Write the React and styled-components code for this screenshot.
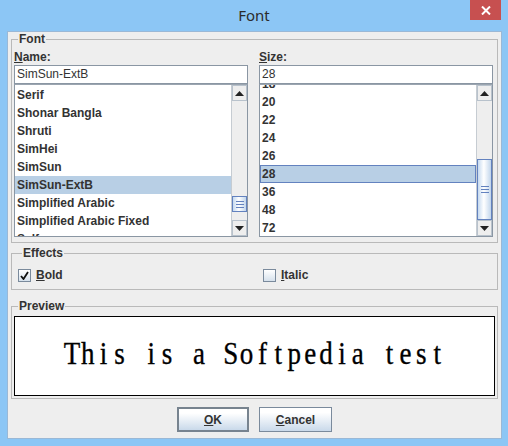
import React from 'react'
import styled, { createGlobalStyle } from 'styled-components'

const GlobalStyle = createGlobalStyle`
  html, body {
    margin: 0;
    padding: 0;
    background: #8cc6f5;
  }
  * {
    box-sizing: border-box;
  }
`

const fontNames = [
  'Serif',
  'Shonar Bangla',
  'Shruti',
  'SimHei',
  'SimSun',
  'SimSun-ExtB',
  'Simplified Arabic',
  'Simplified Arabic Fixed',
  'Sylfaen',
]

const sizes = ['18', '20', '22', '24', '26', '28', '36', '48', '72']

const previewText = 'This is a Softpedia test'

const Window = styled.div`
  width: 508px;
  height: 446px;
  background: #8cc6f5;
  display: flex;
  flex-direction: column;
  font-family: 'Liberation Sans', Arial, sans-serif;
  color: #333;
`

const TitleBar = styled.div`
  height: 31px;
  display: grid;
  grid-template-columns: 1fr auto 1fr;
  align-items: start;
`

const Title = styled.div`
  grid-column: 2;
  font-family: 'Noto Sans', 'Open Sans', sans-serif;
  font-size: 15px;
  line-height: 30px;
  color: #2b2b2b;
`

const CloseButton = styled.div`
  grid-column: 3;
  justify-self: end;
  margin-right: 7px;
  width: 31px;
  height: 20px;
  background: #c75050;
  display: flex;
  align-items: center;
  justify-content: center;
`

const Client = styled.div`
  flex: 1;
  margin: 0 6px 7px 7px;
  border: 1px solid #9ab8d6;
  background: #eeeeee;
  display: flex;
  flex-direction: column;
`

const Group = styled.fieldset`
  margin: ${(p) => p.$top || 0}px 3px 0 3px;
  min-width: 0;
  height: ${(p) => p.$height}px;
  border: 1px solid #b9b9b9;
  padding: ${(p) => p.$padding};
`

const Legend = styled.legend`
  margin-left: 4px;
  padding: 0 1px;
  font-size: 12px;
  font-weight: bold;
  line-height: 14px;
  color: #333;
`

const Columns = styled.div`
  display: grid;
  grid-template-columns: 234px 234px;
  column-gap: 11px;
`

const Column = styled.div`
  display: flex;
  flex-direction: column;
`

const Label = styled.div`
  font-size: 12px;
  font-weight: bold;
  line-height: 15px;
  height: 15px;
`

const TextField = styled.div`
  height: 19px;
  border: 1px solid #8a96a3;
  background: #fff;
  font-size: 12px;
  line-height: 17px;
  padding-left: 2px;
`

const ListBox = styled.div`
  height: 153px;
  border: 1px solid #8a96a3;
  border-top-color: #9ba5b0;
  background: #fff;
  display: flex;
  overflow: hidden;
`

const Items = styled.div`
  flex: 1;
  overflow: hidden;
  display: flex;
  flex-direction: column;
`

const ItemsInner = styled.div`
  margin-top: ${(p) => p.$offset}px;
  display: flex;
  flex-direction: column;
`

const Item = styled.div`
  height: 18px;
  flex: none;
  font-size: 12px;
  font-weight: bold;
  padding-left: ${(p) => p.$indent}px;
  white-space: nowrap;
  background: ${(p) => (p.$selected ? '#b8cfe5' : 'transparent')};
  border: ${(p) => (p.$focused ? '1px solid #6382bf' : 'none')};
  line-height: ${(p) => (p.$focused ? '16px' : '18px')};
`

const ScrollBar = styled.div`
  width: 16px;
  flex: none;
  background: #eeeeee;
  border-left: 1px solid #c6ccd2;
  display: flex;
  flex-direction: column;
`

const ArrowButton = styled.div`
  height: 16px;
  flex: none;
  border: 1px solid #b8c2cc;
  background: #eeeeee;
  display: flex;
  align-items: center;
  justify-content: center;
`

const Track = styled.div`
  flex: 1;
  display: flex;
  flex-direction: column;
`

const Thumb = styled.div`
  margin-top: ${(p) => p.$top}px;
  height: ${(p) => p.$height}px;
  border: 1px solid #6382bf;
  background: linear-gradient(to right, #c6daf0, #ffffff 45%, #c2d6ec);
  display: flex;
  flex-direction: column;
  align-items: center;
  justify-content: center;
  gap: 2px;
`

const Grip = styled.div`
  width: 8px;
  height: 1px;
  background: #6382bf;
`

const CheckRow = styled.div`
  display: grid;
  grid-template-columns: 245px 1fr;
  align-items: center;
`

const CheckItem = styled.label`
  display: flex;
  align-items: center;
  gap: 5px;
  font-size: 12px;
  font-weight: bold;
  line-height: 15px;
`

const CheckBox = styled.span`
  width: 13px;
  height: 13px;
  border: 1px solid #7a8a9c;
  background: linear-gradient(#ffffff, #d6e1ec);
  display: flex;
  align-items: center;
  justify-content: center;
`

const PreviewBox = styled.div`
  height: 80px;
  border: 1px solid #000;
  background: #fff;
  display: flex;
  align-items: center;
  justify-content: center;
`

const PreviewLine = styled.div`
  display: flex;
  font-family: 'Liberation Serif', 'DejaVu Serif', serif;
  font-size: 27px;
  line-height: 32px;
  color: #000;
  margin-top: -4px;
  transform: scaleY(1.14);
  -webkit-text-stroke: 0.3px #000;
`

/* SimSun draws latin text in fixed cells, so each glyph gets one */
const Cell = styled.span`
  display: inline-block;
  width: 15.9px;
  text-align: center;
  white-space: pre;
`

const ButtonRow = styled.div`
  margin-top: 8px;
  display: flex;
  justify-content: center;
  gap: 10px;
`

const Button = styled.div`
  width: ${(p) => p.$width}px;
  height: 25px;
  border: ${(p) => (p.$default ? '2px solid #77838f' : '1px solid #7a8a9c')};
  background: linear-gradient(#ffffff, #ffffff 20%, #c9d9ea);
  font-size: 12px;
  font-weight: bold;
  display: flex;
  align-items: center;
  justify-content: center;
`

const UpArrow = () => (
  <svg width="9" height="5" viewBox="0 0 9 5">
    <polygon points="0,5 9,5 4.5,0" fill="#222" />
  </svg>
)

const DownArrow = () => (
  <svg width="9" height="5" viewBox="0 0 9 5">
    <polygon points="0,0 9,0 4.5,5" fill="#222" />
  </svg>
)

const Scroller = ({ thumbTop, thumbHeight }) => (
  <ScrollBar>
    <ArrowButton>
      <UpArrow />
    </ArrowButton>
    <Track>
      <Thumb $top={thumbTop} $height={thumbHeight}>
        <Grip />
        <Grip />
        <Grip />
      </Thumb>
    </Track>
    <ArrowButton>
      <DownArrow />
    </ArrowButton>
  </ScrollBar>
)

const Check = ({ checked, children }) => (
  <CheckItem>
    <CheckBox>
      {checked && (
        <svg width="9" height="9" viewBox="0 0 9 9">
          <path d="M1 5 L3.5 8 L8 1" stroke="#111" strokeWidth="1.8" fill="none" />
        </svg>
      )}
    </CheckBox>
    <span>{children}</span>
  </CheckItem>
)

const App = () => {
  return (
    <>
      <GlobalStyle />
      <Window>
        <TitleBar>
          <Title>Font</Title>
          <CloseButton>
            <svg width="10" height="9" viewBox="0 0 10 9">
              <path d="M1 0.5 L9 8.5 M9 0.5 L1 8.5" stroke="#fff" strokeWidth="2" />
            </svg>
          </CloseButton>
        </TitleBar>
        <Client>
          <Group $height={211} $padding="4px 3px 0 2px">
            <Legend>Font</Legend>
            <Columns>
              <Column>
                <Label>
                  <u>N</u>ame:
                </Label>
                <TextField>SimSun-ExtB</TextField>
                <ListBox>
                  <Items>
                    <ItemsInner $offset={1}>
                      {fontNames.map((name) => (
                        <Item key={name} $indent={2} $selected={name === 'SimSun-ExtB'}>
                          {name}
                        </Item>
                      ))}
                    </ItemsInner>
                  </Items>
                  <Scroller thumbTop={95} thumbHeight={16} />
                </ListBox>
              </Column>
              <Column>
                <Label>
                  <u>S</u>ize:
                </Label>
                <TextField>28</TextField>
                <ListBox>
                  <Items>
                    <ItemsInner $offset={-10}>
                      {sizes.map((s) => (
                        <Item
                          key={s}
                          $indent={s === '28' ? 1 : 2}
                          $selected={s === '28'}
                          $focused={s === '28'}
                        >
                          {s}
                        </Item>
                      ))}
                    </ItemsInner>
                  </Items>
                  <Scroller thumbTop={58} thumbHeight={61} />
                </ListBox>
              </Column>
            </Columns>
          </Group>

          <Group $top={3} $height={44} $padding="8px 3px 0 6px">
            <Legend>Effects</Legend>
            <CheckRow>
              <Check checked>
                <u>B</u>old
              </Check>
              <Check>
                <u>I</u>talic
              </Check>
            </CheckRow>
          </Group>

          <Group $top={9} $height={100} $padding="3px 2px 0 2px">
            <Legend>Preview</Legend>
            <PreviewBox>
              <PreviewLine>
                {previewText.split('').map((ch, i) => (
                  <Cell key={i}>{ch}</Cell>
                ))}
              </PreviewLine>
            </PreviewBox>
          </Group>

          <ButtonRow>
            <Button $width={72} $default>
              <span>
                <u>O</u>K
              </span>
            </Button>
            <Button $width={73}>
              <span>
                <u>C</u>ancel
              </span>
            </Button>
          </ButtonRow>
        </Client>
      </Window>
    </>
  )
}

export default App
